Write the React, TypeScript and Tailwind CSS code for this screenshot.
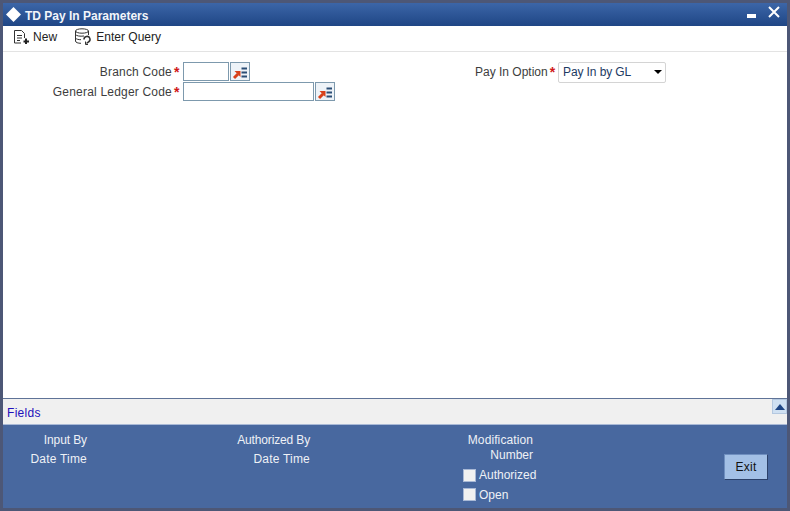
const LookupIcon = () => (
  <button className="flex h-[19px] w-[20px] items-center justify-center border border-[#7d99ad] bg-[#eef3f8]">
    <svg width="16" height="16" viewBox="0 0 16 16">
      <path d="M2 14 L6 10" stroke="#d8401a" strokeWidth="3" fill="none" />
      <path d="M2.5 7 H8.5 V13 Z" fill="#d8401a" />
      <rect x="9.5" y="3.5" width="5.5" height="2" fill="#2a4d75" />
      <rect x="9.5" y="7.5" width="5.5" height="2" fill="#2a4d75" />
      <rect x="9.5" y="11.5" width="5.5" height="2" fill="#2a4d75" />
    </svg>
  </button>
);

const Label = ({ text, className }: { text: string; className: string }) => (
  <div className={`${className} flex shrink-0 items-center justify-end gap-[2px] pr-[2px] whitespace-nowrap text-[#3d3d3d]`}>
    <span>{text}</span>
    <span className="w-[7px] text-[14px] font-bold leading-none text-[#d01818]">*</span>
  </div>
);

const App = () => {
  return (
    <div className="flex h-[511px] w-[790px] flex-col overflow-hidden bg-[#4d5776] px-[3px] pt-[3px] pb-[3px] font-['Liberation_Sans',Arial,sans-serif] text-[12px] text-[#333]">
      {/* Title bar */}
      <header className="flex h-[23px] shrink-0 items-center bg-gradient-to-b from-[#3c66a8] to-[#1f4685] text-white">
        <svg className="ml-[2px]" width="17" height="17" viewBox="0 0 17 17">
          <path d="M8.5 1 L16 8.5 L8.5 16 L1 8.5 Z" fill="#fff" />
        </svg>
        <span className="ml-[3px] mt-[2px] text-[12px] font-bold text-[#f2f5fa]">TD Pay In Parameters</span>
        <svg className="ml-auto mt-px" width="10" height="5" viewBox="0 0 10 5">
          <rect width="9" height="4" y="1" fill="#fff" />
        </svg>
        <svg className="mb-[6px] ml-[11px] mr-[7px]" width="12" height="12" viewBox="0 0 12 12">
          <path d="M1 1 L11 11 M11 1 L1 11" stroke="#fff" strokeWidth="2" />
        </svg>
      </header>

      {/* Toolbar */}
      <div className="flex h-[26px] shrink-0 items-center border-b border-[#e3e3e3] bg-white pb-[4px] text-[12px] text-[#222]">
        <button className="ml-[10px] flex items-center gap-[2px]">
          <svg width="18" height="16" viewBox="0 0 18 16" fill="none" stroke="#333" strokeWidth="1">
            <path d="M1.5 14 V1.5 H8.5 L11.5 4.5 V9" />
            <path d="M1.5 14 H8" />
            <path d="M4 6.5 H9 M4 9 H9 M4 11.5 H7" />
            <path d="M13 9.5 V15 M10.5 12.5 H16" strokeWidth="2" stroke="#222" />
          </svg>
          <span className="tracking-[0.1px]">New</span>
        </button>
        <button className="ml-[17px] flex items-center gap-[4px]">
          <svg width="18" height="17" viewBox="0 0 18 17" fill="none" stroke="#333" strokeWidth="1">
            <ellipse cx="8" cy="3" rx="6.5" ry="2.2" />
            <path d="M1.5 3 V13 C1.5 14.5 4 15.3 7 15.3" />
            <path d="M14.5 3 V7" />
            <path d="M1.5 6.5 C2.5 8 6 8.5 10 8" />
            <path d="M1.5 10 C2.5 11.3 4.5 11.7 7 11.7" />
            <path d="M10 11.5 A3 3 0 1 1 14.5 14 L12.5 15.5" strokeWidth="1.5" />
            <path d="M11.5 13.5 V16.5 H14" strokeWidth="1" />
          </svg>
          <span>Enter Query</span>
        </button>
      </div>

      {/* Form */}
      <main className="flex min-h-0 flex-1 bg-white pt-[10px]">
        <div className="flex w-[472px] shrink-0 flex-col">
          <div className="flex h-[20px] items-start">
            <Label text="Branch Code" className="h-[19px] w-[180px] tracking-[0.2px]" />
            <input className="h-[19px] w-[46px] border border-[#7d99ad] bg-white" />
            <div className="ml-px">
              <LookupIcon />
            </div>
          </div>
          <div className="flex h-[20px] items-start">
            <Label text="General Ledger Code" className="h-[19px] w-[180px] tracking-[0.2px]" />
            <input className="h-[19px] w-[131px] border border-[#7d99ad] bg-white" />
            <div className="ml-px">
              <LookupIcon />
            </div>
          </div>
        </div>
        <div className="flex h-[20px] items-center">
          <Label text="Pay In Option" className="w-[83px]" />
          <div className="flex h-[21px] w-[108px] items-center rounded-[2px] border border-[#d4d4d4] bg-white pl-[4px] pr-[3px] tracking-[-0.1px] text-[#1d3a63]">
            <span>Pay In by GL</span>
            <span className="ml-auto h-0 w-0 border-x-[4px] border-t-[4px] border-x-transparent border-t-black" />
          </div>
        </div>
      </main>

      {/* Fields bar */}
      <div className="flex h-[27px] shrink-0 items-start justify-between border-y border-t-[#5f7397] border-b-[#a9b9d6] bg-[#f0f0f0] pl-[4px]">
        <span className="mt-[5px] text-[12px] tracking-[0.3px] text-[#2211bb]">Fields</span>
        <button className="flex h-[15px] w-[15px] items-center justify-center border border-[#b4c8e0] bg-[#cfe0f2]">
          <span className="h-0 w-0 border-x-[5px] border-b-[6px] border-x-transparent border-b-[#1f4685]" />
        </button>
      </div>

      {/* Audit panel */}
      <footer className="flex h-[83px] shrink-0 bg-[#48689f] text-[12px] text-[#eef1f6]">
        <div className="mt-[6px] flex w-[84px] shrink-0 flex-col text-right leading-[19px]">
          <span className="tracking-[-0.1px]">Input By</span>
          <span className="tracking-[0.2px]">Date Time</span>
        </div>
        <div className="mt-[6px] flex w-[223px] shrink-0 flex-col text-right leading-[19px]">
          <span className="tracking-[-0.15px]">Authorized By</span>
          <span className="tracking-[0.2px]">Date Time</span>
        </div>
        <div className="mt-[8px] flex w-[223px] shrink-0 flex-col">
          <div className="text-right leading-[15px]">
            <div className="tracking-[0.1px]">Modification</div>
            <div>Number</div>
          </div>
          <label className="ml-[153px] mt-[2px] flex h-[20px] items-center gap-[3px]">
            <span className="h-[13px] w-[13px] shrink-0 border border-[#a9b9d6] bg-[#f1f1f1]" />
            <span>Authorized</span>
          </label>
          <label className="ml-[153px] flex h-[19px] items-center gap-[3px]">
            <span className="h-[13px] w-[13px] shrink-0 border border-[#a9b9d6] bg-[#f1f1f1]" />
            <span>Open</span>
          </label>
        </div>
        <button className="ml-auto mr-[19px] mt-[29px] h-[26px] w-[44px] border border-b-[#2c4169] border-r-[#2c4169] border-l-[#6f8fc0] border-t-[#6f8fc0] bg-[#a3c0e6] text-[12px] tracking-[0.3px] text-[#111]">
          Exit
        </button>
      </footer>
    </div>
  );
};

export default App;
